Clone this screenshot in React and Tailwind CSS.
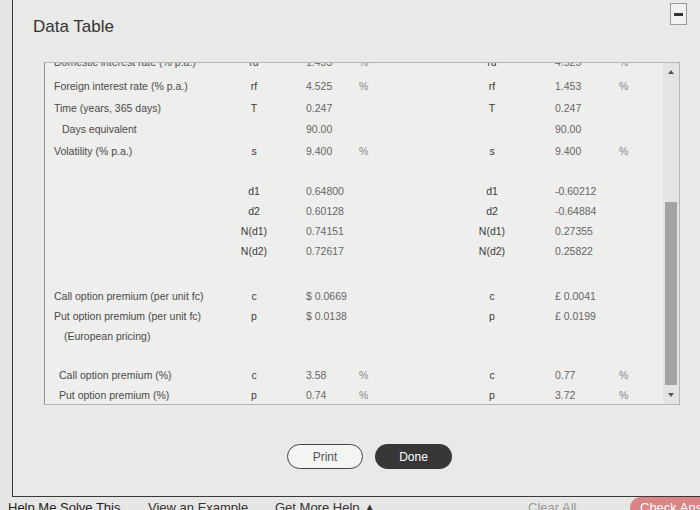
import React from 'react';

const font = { fontFamily: '"Liberation Sans", Arial, sans-serif' };

// one line of the data table; left and right halves share the same columns
const Row = ({ h = 'h-[20px]', label, indent = '', ls, lv, lu, rs, rv, ru }) => (
  <div className={`flex items-center ${h} text-[10.5px] whitespace-nowrap`}>
    <div className={`w-[189px] pl-[9px] text-[#4a4a4a] ${indent}`}>{label}</div>
    <div className="w-[40px] text-center text-[#3a3a3a]">{ls}</div>
    <div className="w-[32px]" />
    <div className="w-[53px] text-[#666]">{lv}</div>
    <div className="w-[20px] text-[#888]">{lu}</div>
    <div className="w-[93px]" />
    <div className="w-[40px] text-center text-[#3a3a3a]">{rs}</div>
    <div className="w-[43px]" />
    <div className="w-[64px] text-[#666]">{rv}</div>
    <div className="w-[20px] text-[#888]">{ru}</div>
  </div>
);

const Spacer = ({ h }) => <div className={h} />;

export default function App() {
  return (
    <div className="w-[700px] h-[510px] overflow-hidden bg-[#e6e6e4] flex flex-col" style={font}>
      <div className="h-[497px] shrink-0 ml-[12px] border-l border-b border-[#3a3a3a] bg-[#e9e9e7] flex flex-col">
        {/* header */}
        <div className="flex items-start justify-between">
          <h1 className="pt-[17px] pl-[20px] text-[17px] leading-[20px] font-normal text-[#333]">Data Table</h1>
          <button className="mt-[3px] mr-[13px] w-[17px] h-[22px] border border-[#9a9a9a] bg-[#f2f2f0] flex items-center justify-center">
            <span className="block w-[9px] h-[3px] bg-[#333]" />
          </button>
        </div>

        {/* table panel */}
        <div className="mt-[25px] ml-[31px] w-[636px] h-[343px] border border-[#b5b5b3] border-l-[#8f8f8d] bg-[#eeeeec] flex">
          <div className="flex-1 overflow-hidden">
            <div className="-mt-[8px]">
              <Row h="h-[21.5px] pb-[5px]" label="Domestic interest rate (% p.a.)" ls="rd" lv="1.453" lu="%" rs="rd" rv="4.525" ru="%" />
              <Row h="h-[21.5px]" label="Foreign interest rate (% p.a.)" ls="rf" lv="4.525" lu="%" rs="rf" rv="1.453" ru="%" />
              <Row h="h-[21.5px]" label="Time (years, 365 days)" ls="T" lv="0.247" rs="T" rv="0.247" />
              <Row h="h-[21.5px]" label="Days equivalent" indent="pl-[17px]" lv="90.00" rv="90.00" />
              <Row h="h-[21.5px]" label="Volatility (% p.a.)" ls="s" lv="9.400" lu="%" rs="s" rv="9.400" ru="%" />
              <Spacer h="h-[19px]" />
              <Row ls="d1" lv="0.64800" rs="d1" rv="-0.60212" />
              <Row ls="d2" lv="0.60128" rs="d2" rv="-0.64884" />
              <Row ls="N(d1)" lv="0.74151" rs="N(d1)" rv="0.27355" />
              <Row ls="N(d2)" lv="0.72617" rs="N(d2)" rv="0.25822" />
              <Spacer h="h-[25px]" />
              <Row label="Call option premium (per unit fc)" ls="c" lv="$ 0.0669" rs="c" rv="£ 0.0041" />
              <Row label="Put option premium (per unit fc)" ls="p" lv="$ 0.0138" rs="p" rv="£ 0.0199" />
              <Row label="(European pricing)" indent="pl-[19px]" />
              <Spacer h="h-[19px]" />
              <Row label="Call option premium (%)" indent="pl-[14px]" ls="c" lv="3.58" lu="%" rs="c" rv="0.77" ru="%" />
              <Row label="Put option premium (%)" indent="pl-[14px]" ls="p" lv="0.74" lu="%" rs="p" rv="3.72" ru="%" />
            </div>
          </div>

          {/* scrollbar */}
          <div className="w-[16px] bg-[#e4e4e2] flex flex-col items-center">
            <div className="h-[18px] flex items-center justify-center">
              <span className="block w-0 h-0 border-l-[3px] border-r-[3px] border-b-[4px] border-l-transparent border-r-transparent border-b-[#555]" />
            </div>
            <div className="flex-1 w-full flex flex-col items-center">
              <div className="mt-[121px] w-[12px] h-[183px] bg-[#a3a3a1]" />
            </div>
            <div className="h-[18px] flex items-center justify-center">
              <span className="block w-0 h-0 border-l-[3px] border-r-[3px] border-t-[4px] border-l-transparent border-r-transparent border-t-[#555]" />
            </div>
          </div>
        </div>

        {/* buttons */}
        <div className="mt-[39px] pl-[274px] flex items-center gap-[12px]">
          <button className="w-[76px] h-[25px] rounded-full border-[1.5px] border-[#444] bg-[#f4f4f2] text-[12px] text-[#555]">Print</button>
          <button className="w-[77px] h-[25px] rounded-full bg-[#373737] text-[12px] text-white">Done</button>
        </div>
      </div>

      {/* page toolbar peeking out below the dialog */}
      <div className="h-[13px] shrink-0 overflow-hidden text-[13px] leading-[16px] whitespace-nowrap">
        <div className="mt-[3px] flex items-start">
          <span className="shrink-0 ml-[8px] w-[140px] text-[#222]">Help Me Solve This</span>
          <span className="shrink-0 w-[127px] text-[#333]">View an Example</span>
          <span className="shrink-0 w-[253px] text-[#333]">Get More Help ▲</span>
          <span className="shrink-0 w-[102px] text-[#9a9a9a]">Clear All</span>
          <span className="shrink-0 -mt-[3px] h-[22px] pl-[10px] pr-[20px] rounded-full bg-[#d98585] text-white leading-[22px]">Check Answer</span>
        </div>
      </div>
    </div>
  );
}
